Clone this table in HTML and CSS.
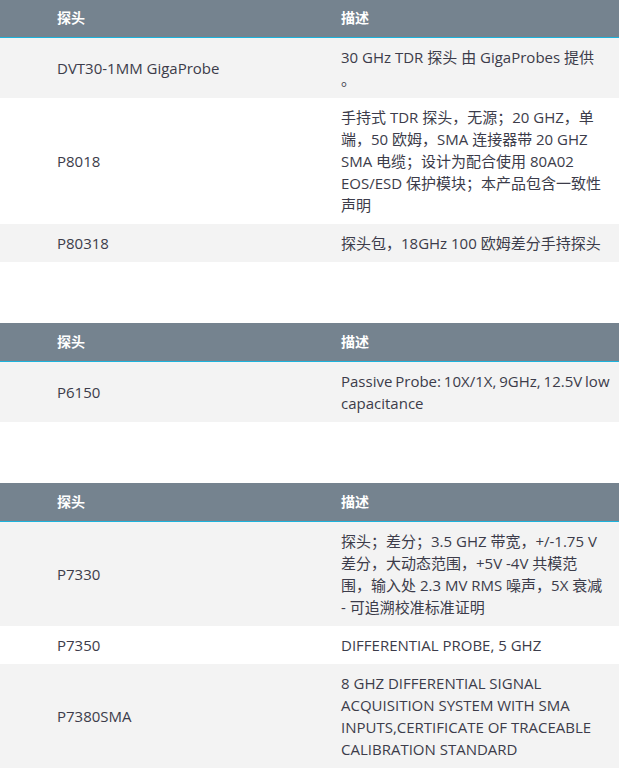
FILE: index.html
```html
<!DOCTYPE html>
<html lang="zh-CN">
<head>
<meta charset="utf-8">
<link rel="stylesheet" href="styles.css">
</head>
<body>
<div class="page">
  <table class="spec">
    <thead><tr><th>探头</th><th>描述</th></tr></thead>
    <tbody>
      <tr><td>DVT30-1MM GigaProbe</td><td>30 GHz TDR 探头 由 GigaProbes 提供 。</td></tr>
      <tr><td>P8018</td><td>手持式 TDR 探头，无源；20 GHZ，单端，50 欧姆，SMA 连接器带 20 GHZ SMA 电缆；设计为配合使用 80A02 EOS/ESD 保护模块；本产品包含一致性声明</td></tr>
      <tr><td>P80318</td><td>探头包，18GHz 100 欧姆差分手持探头</td></tr>
    </tbody>
  </table>

  <table class="spec">
    <thead><tr><th>探头</th><th>描述</th></tr></thead>
    <tbody>
      <tr><td>P6150</td><td class="tight">Passive Probe: 10X/1X, 9GHz, 12.5V low capacitance</td></tr>
    </tbody>
  </table>

  <table class="spec">
    <thead><tr><th>探头</th><th>描述</th></tr></thead>
    <tbody>
      <tr><td>P7330</td><td>探头；差分；3.5 GHZ 带宽，+/-1.75 V 差分，大动态范围，+5V -4V 共模范<br>围，输入处 2.3 MV RMS 噪声，5X 衰减<br>- 可追溯校准标准证明</td></tr>
      <tr><td>P7350</td><td>DIFFERENTIAL PROBE, 5 GHZ</td></tr>
      <tr><td>P7380SMA</td><td>8 GHZ DIFFERENTIAL SIGNAL ACQUISITION SYSTEM WITH SMA INPUTS,CERTIFICATE OF TRACEABLE CALIBRATION STANDARD</td></tr>
    </tbody>
  </table>
</div>
</body>
</html>
```
FILE: styles.css
```css
html, body {
  margin: 0;
  padding: 0;
  background: #ffffff;
}

body {
  font-family: "Open Sans", "Noto Sans CJK SC", sans-serif;
  font-size: 15px;
  line-height: 22px;
  color: #3c3c4a;
}

.page {
  margin-top: -1px;
  display: flex;
  flex-direction: column;
  gap: 61px;
}

.spec {
  width: 100%;
  border-collapse: collapse;
  table-layout: fixed;
}

.spec th,
.spec td {
  text-align: left;
  vertical-align: middle;
  padding: 8px 10px 8px 57px;
}

.spec th:first-child,
.spec td:first-child {
  width: 217px;
}

.spec td.tight {
  padding-right: 0;
  word-spacing: -1px;
}

.spec thead th {
  background: #75838f;
  color: #ffffff;
  font-size: 14px;
  font-weight: 700;
  border-bottom: 1px solid #1cb3dc;
}

.spec tbody tr:nth-child(odd) td {
  background: #f3f3f3;
}

.spec tbody tr:nth-child(even) td {
  background: #ffffff;
}
```
